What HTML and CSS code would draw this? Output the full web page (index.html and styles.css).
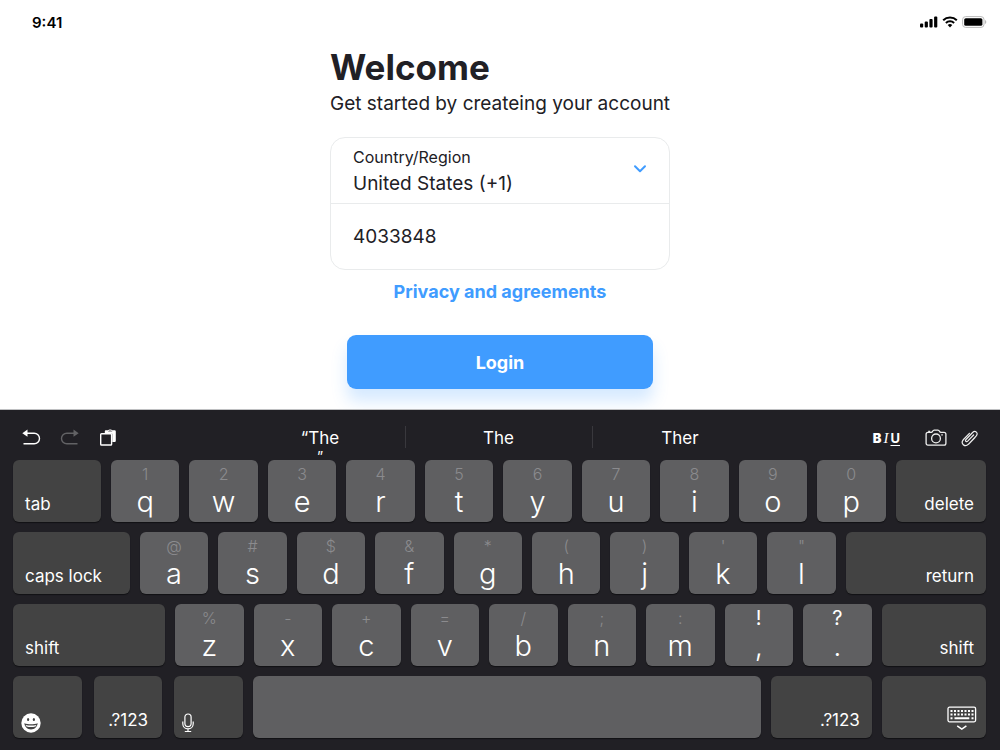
FILE: index.html
```html
<!DOCTYPE html>
<html lang="en">
<head>
<meta charset="utf-8">
<meta name="viewport" content="width=device-width, initial-scale=1">
<title>Welcome</title>
<link rel="stylesheet" href="styles.css">
</head>
<body>
<div class="screen">
  <header class="status">
    <time class="clock">9:41</time>
    <div class="status-icons">
      <svg width="18" height="12" viewBox="0 0 18 12"><g fill="#000"><rect x="0" y="7.5" width="3.2" height="3.9" rx="1"/><rect x="4.7" y="5.4" width="3.2" height="6" rx="1"/><rect x="9.4" y="3" width="3.2" height="8.4" rx="1"/><rect x="14.1" y="0.6" width="3.2" height="10.8" rx="1"/></g></svg>
      <svg width="16" height="12" viewBox="0 0 16 12"><g fill="none" stroke="#000" stroke-width="2"><path d="M1.2 4.2a9.8 9.8 0 0 1 13.6 0"/><path d="M3.9 7a5.9 5.9 0 0 1 8.2 0"/></g><path d="M8 11.4 5.7 9.1a3.3 3.3 0 0 1 4.6 0z"/></svg>
      <svg width="25" height="12" viewBox="0 0 25 12"><rect x="0.6" y="0.6" width="21.4" height="10.8" rx="3" fill="#fff" stroke="#bbb"/><rect x="2.2" y="2.2" width="18.2" height="7.6" rx="1.6"/><path d="M23.2 4v4c1.4-.6 1.4-3.4 0-4z" fill="#aaa"/></svg>
    </div>
  </header>

  <main class="signup">
    <h1 class="title">Welcome</h1>
    <p class="subtitle">Get started by createing your account</p>
    <form class="form">
      <div class="card">
        <div class="field country">
          <label class="label" for="country">Country/Region</label>
          <select class="control" id="country"><option>United States (+1)</option></select>
          <svg class="chevron" width="14" height="10" viewBox="0 0 14 10"><path d="M2 2.2 7 7.2l5-5" fill="none" stroke="#409cff" stroke-width="2" stroke-linecap="round" stroke-linejoin="round"/></svg>
        </div>
        <div class="field phone">
          <input class="control" type="tel" aria-label="Phone number" value="4033848">
        </div>
      </div>
      <a class="link" href="#">Privacy and agreements</a>
      <button class="login" type="button">Login</button>
    </form>
  </main>

  <section class="keyboard" aria-label="Keyboard">
    <div class="toolbar">
      <div class="tools">
        <button class="tool" aria-label="Undo"><svg width="20" height="18" viewBox="0 0 20 18"><path d="M5 4.2h8.2a5.3 5.3 0 0 1 0 10.6H2.500" fill="none" stroke="#fff" stroke-width="1.400"/><path d="M1.300 4.200 6.500.6v7.200z" fill="#fff"/></svg></button>
        <button class="tool" aria-label="Redo"><svg width="20" height="18" viewBox="0 0 20 18"><g transform="matrix(-1 0 0 1 20 0)"><path d="M5 4.200h8.200a5.300 5.300 0 0 1 0 10.600H2.500" fill="none" stroke="#626265" stroke-width="1.400"/><path d="M1.300 4.200 6.500.6v7.200z" fill="#626265"/></g></svg></button>
        <button class="tool" aria-label="Paste"><svg width="20" height="18" viewBox="0 0 20 18"><path d="M5.800 3.600V2.400c0-.7.5-1.200 1.200-1.200h2.100C9.700.2 12.700.2 13.300 1.200h2.100c.9 0 1.400.5 1.400 1.300v9.300c0 .8-.5 1.300-1.300 1.300h-2.200V4.800H5.800z" fill="#fff"/><path d="M9.200 2.400h4M10 1.400h2.400" stroke="#77767a" stroke-width=".7"/><rect x="1.700" y="4.700" width="10.900" height="11.300" rx=".8" fill="#212025" stroke="#fff" stroke-width="1.400"/></svg></button>
      </div>
      <div class="suggestions">
        <button class="suggestion">“The<span class="quote">”</span></button>
        <button class="suggestion">The</button>
        <button class="suggestion">Ther</button>
      </div>
      <div class="tools tools-end">
        <button class="tool format" aria-label="Text format"><b>B</b><i>I</i><u>U</u></button>
        <button class="tool" aria-label="Camera"><svg width="22" height="18" viewBox="0 0 22 18"><g fill="none" stroke="#eee" stroke-width="1.300"><path d="M3 3.400h3.200c.8 0 1-.4 1.400-1.100C8 1.500 8.300 1.100 9.200 1.100h3.700c.9 0 1.200.4 1.600 1.200.4.700.6 1.100 1.400 1.100H19c1.200 0 1.900.7 1.900 1.900v8.900c0 1.200-.7 1.900-1.900 1.900H3c-1.200 0-1.900-.7-1.900-1.900V5.300c0-1.200.7-1.900 1.900-1.900z"/><circle cx="11" cy="9.400" r="4.400"/><path d="M3.200 2.500h2M16.300 5.800h1.500"/></g></svg></button>
        <button class="tool" aria-label="Attach"><svg width="18" height="18" viewBox="0 0 18 18"><path d="m12.600 6-5.900 6.200c-1.300 1.300-3-.3-1.700-1.700l6.600-7c2.600-2.700 6.200.5 3.700 3.300l-7.800 8.300c-3.700 3.800-8.500-.7-5-4.600l5.900-6.200M14 8.500l-6.300 6.600" fill="none" stroke="#eee" stroke-width="1.200" stroke-linecap="round"/></svg></button>
      </div>
    </div>

    <div class="row row-top">
      <button class="key special">tab</button>
      <button class="key"><span class="hint">1</span>q</button>
      <button class="key"><span class="hint">2</span>w</button>
      <button class="key"><span class="hint">3</span>e</button>
      <button class="key"><span class="hint">4</span>r</button>
      <button class="key"><span class="hint">5</span>t</button>
      <button class="key"><span class="hint">6</span>y</button>
      <button class="key"><span class="hint">7</span>u</button>
      <button class="key"><span class="hint">8</span>i</button>
      <button class="key"><span class="hint">9</span>o</button>
      <button class="key"><span class="hint">0</span>p</button>
      <button class="key special end">delete</button>
    </div>
    <div class="row row-home">
      <button class="key special">caps lock</button>
      <button class="key"><span class="hint">@</span>a</button>
      <button class="key"><span class="hint">#</span>s</button>
      <button class="key"><span class="hint">$</span>d</button>
      <button class="key"><span class="hint">&amp;</span>f</button>
      <button class="key"><span class="hint">*</span>g</button>
      <button class="key"><span class="hint">(</span>h</button>
      <button class="key"><span class="hint">)</span>j</button>
      <button class="key"><span class="hint">'</span>k</button>
      <button class="key"><span class="hint">"</span>l</button>
      <button class="key special end">return</button>
    </div>
    <div class="row row-shift">
      <button class="key special">shift</button>
      <button class="key"><span class="hint">%</span>z</button>
      <button class="key"><span class="hint">-</span>x</button>
      <button class="key"><span class="hint">+</span>c</button>
      <button class="key"><span class="hint">=</span>v</button>
      <button class="key"><span class="hint">/</span>b</button>
      <button class="key"><span class="hint">;</span>n</button>
      <button class="key"><span class="hint">:</span>m</button>
      <button class="key punct"><span class="hint">!</span>,</button>
      <button class="key punct"><span class="hint">?</span>.</button>
      <button class="key special end">shift</button>
    </div>
    <div class="row row-space">
      <div class="group">
        <button class="key special icon" aria-label="Emoji"><svg width="20" height="20" viewBox="0 0 20 20"><circle cx="10" cy="10" r="9.700" fill="#fff"/><ellipse cx="7.100" cy="6.500" rx="1.100" ry="1.600" fill="#434343"/><ellipse cx="12.900" cy="6.500" rx="1.100" ry="1.600" fill="#434343"/><path d="M3.300 10.300c3.700 1.300 9.700 1.300 13.400 0-.4 3.700-3.200 6.200-6.700 6.200s-6.300-2.500-6.700-6.200z" fill="#434343"/><path d="M4.600 11.900c3.200.9 7.600.9 10.800 0-.3.700-.6 1.200-1 1.600-2.600.7-6.200.7-8.800 0-.4-.4-.7-.9-1-1.600z" fill="#fff"/></svg></button>
        <button class="key special center">.?123</button>
        <button class="key special icon" aria-label="Dictate"><svg width="12" height="20" viewBox="0 0 12 20"><g fill="none" stroke="#fff" stroke-width="1.200"><rect x="2.900" y="1" width="6.200" height="12.600" rx="3.100"/><path d="M.8 8.500v2.200c0 6.800 10.400 6.800 10.400 0V8.500M6 15.800v2.600M2.800 18.500h6.400"/></g></svg></button>
      </div>
      <button class="key" aria-label="Space"></button>
      <button class="key special end">.?123</button>
      <button class="key special end hide" aria-label="Hide keyboard"><svg width="30" height="25" viewBox="0 0 30 25"><rect x="1" y="1.200" width="27.600" height="14.600" rx="1.500" fill="none" stroke="#fff" stroke-width="1.300"/><path d="M3.500 4.900h23M3.500 8.500h23" stroke="#fff" stroke-width="2" stroke-dasharray="2 1.500"/><path d="M3.500 12.200h2M7.500 12.200h14.800M24.500 12.200h2" stroke="#fff" stroke-width="2"/><path d="m10.200 19.800 4.600 3.200 4.600-3.200" fill="none" stroke="#fff" stroke-width="1.500"/></svg></button>
    </div>
  </section>
</div>
</body>
</html>
```
FILE: styles.css
```css
* {
  box-sizing: border-box;
}

body {
  margin: 0;
  background: #fff;
  color: #212025;
  font-family: Inter, "Liberation Sans", sans-serif;
}

button,
input,
select {
  margin: 0;
  padding: 0;
  border: 0;
  background: none;
  color: inherit;
  font: inherit;
  outline: none;
}

svg {
  display: block;
}

.screen {
  display: flex;
  flex-direction: column;
  min-height: 100vh;
}

.status {
  display: flex;
  align-items: center;
  justify-content: space-between;
  height: 44px;
  padding: 0 13px 0 32px;
}

.clock {
  color: #000;
  font-size: 15px;
  font-weight: 600;
}

.status-icons {
  display: flex;
  gap: 4px;
}

.signup {
  flex: 1;
  width: 100%;
  max-width: 340px;
  margin: 0 auto;
  padding-bottom: 20px;
}

.title {
  margin: 0;
  font-size: 35px;
  font-weight: 700;
  line-height: 46px;
}

.subtitle {
  margin: 0 0 20px;
  font-size: 19px;
  line-height: 27px;
  white-space: nowrap;
}

.form {
  display: flex;
  flex-direction: column;
}

.card {
  border: 1px solid #e9ebec;
  border-radius: 15px;
}

.field {
  height: 65px;
  padding: 0 22px;
}

.country {
  position: relative;
  display: flex;
  flex-direction: column;
  padding-top: 6px;
}

.phone {
  height: 66px;
  border-top: 1px solid #e9ebec;
}

.label {
  font-size: 16px;
  line-height: 26px;
}

.control {
  appearance: none;
  display: block;
  width: 100%;
  height: 28px;
  font-size: 19px;
  line-height: 28px;
}

.phone .control {
  height: 64px;
}

.chevron {
  position: absolute;
  right: 22px;
  top: 26px;
}

.link {
  align-self: center;
  margin-top: 10px;
  color: #409cff;
  font-size: 18px;
  font-weight: 700;
  line-height: 24px;
  text-decoration: none;
}

.login {
  height: 54px;
  margin: 31px 17px 0;
  border-radius: 9px;
  background: #409cff;
  box-shadow: 0 12px 16px rgba(64, 156, 255, 0.22);
  color: #fff;
  font-size: 18px;
  font-weight: 700;
}

.keyboard {
  display: flex;
  flex-direction: column;
  gap: 10px;
  padding: 0 14px 12px 13px;
  border-top: 1px solid #bfc0c2;
  background: #212025;
  color: #fff;
}

.toolbar {
  display: grid;
  grid-template-columns: 222fr 533fr 218fr;
  height: 50px;
  margin-bottom: -10px;
}

.tools {
  display: flex;
  align-items: center;
  gap: 19px;
  padding: 5px 0 0 8px;
}

.tools-end {
  justify-content: flex-end;
  padding-right: 7px;
  gap: 14px;
}

.format {
  display: flex;
  gap: 2px;
  margin-right: 11px;
  font-size: 13px;
  font-weight: 700;
  line-height: 16px;
}

.format i {
  font-family: "Liberation Serif", serif;
  font-size: 15px;
  font-weight: 400;
}

.format u {
  text-underline-offset: 2px;
}

.suggestions {
  display: grid;
  grid-template-columns: 170fr 187fr 176fr;
}

.suggestion {
  position: relative;
  display: flex;
  flex-direction: column;
  align-items: center;
  justify-content: flex-start;
  height: 50px;
  padding-top: 16px;
  font-size: 17px;
  line-height: 24px;
}

.quote {
  font-size: 14px;
  line-height: 14px;
}

.suggestion + .suggestion::before {
  content: "";
  position: absolute;
  left: 0;
  top: 16px;
  width: 1px;
  height: 22px;
  background: #39383d;
}

.row {
  display: grid;
  gap: 10px;
  height: 62px;
}

.row-top {
  grid-template-columns: 176fr repeat(10, 137fr) 181fr;
}

.row-home {
  grid-template-columns: 234fr repeat(9, 137fr) 281fr;
}

.row-shift {
  grid-template-columns: 304fr repeat(9, 137fr) 209fr;
}

.row-space {
  grid-template-columns: 230fr 507fr 101fr 104fr;
}

.group {
  display: grid;
  grid-template-columns: 69fr 67fr 69fr;
  gap: 12px;
}

.key {
  display: flex;
  flex-direction: column;
  align-items: center;
  justify-content: flex-start;
  min-width: 0;
  padding-top: 4px;
  border-radius: 6px;
  background: #5f5f61;
  box-shadow: 0 1px 1px #111114;
  font-size: 29px;
  font-weight: 300;
  line-height: 36px;
}

.hint {
  color: #8b8b8e;
  font-size: 16px;
  line-height: 20px;
}

.punct .hint {
  color: #fff;
  font-size: 20px;
  font-weight: 400;
}

.special {
  justify-content: flex-end;
  align-items: flex-start;
  padding: 0 12px 6px;
  background: #434343;
  font-size: 17px;
  font-weight: 400;
  line-height: 24px;
}

.end {
  align-items: flex-end;
}

.center {
  align-items: center;
}

.icon {
  padding: 0 8px 5px;
}

.hide {
  padding: 0 9px 7px;
}
```
